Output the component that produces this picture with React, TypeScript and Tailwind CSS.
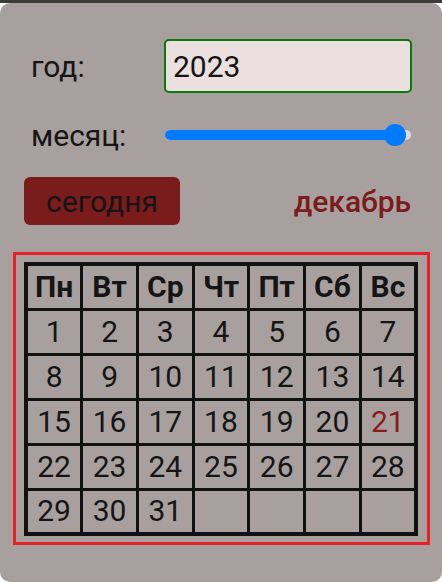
import React from 'react';

const days = ['Пн', 'Вт', 'Ср', 'Чт', 'Пт', 'Сб', 'Вс'];

function buildWeeks(): (number | null)[][] {
  const cells: (number | null)[] = [];
  for (let d = 1; d <= 31; d++) cells.push(d);
  while (cells.length % 7 !== 0) cells.push(null);
  const weeks: (number | null)[][] = [];
  for (let i = 0; i < cells.length; i += 7) weeks.push(cells.slice(i, i + 7));
  return weeks;
}

function MonthSlider() {
  return (
    <div className="relative h-[22px] w-[246px]">
      <div className="absolute left-0 right-0 top-[6px] h-[10px] rounded-full bg-[#dcdcdc]" />
      <div className="absolute left-0 top-[6px] h-[10px] w-[238px] rounded-full bg-[#007bff]" />
      <div className="absolute left-[219px] top-0 h-[22px] w-[22px] rounded-full bg-[#007bff]" />
    </div>
  );
}

export default function App() {
  const weeks = buildWeeks();
  const today = 21;

  return (
    <div className="min-h-screen bg-white" style={{ fontFamily: 'Roboto, "Liberation Sans", sans-serif' }}>
      <div className="h-[3px] bg-[#3b3b3b]" />
      <div className="h-[579px] rounded-[10px] bg-[#a8a09f] pl-[13px] pr-[12px] pt-[36px] text-[#151515]">
        <div className="flex h-[54px] items-center">
          <span className="ml-[18px] w-[133px] text-[30px]">год:</span>
          <div className="flex h-[54px] w-[248px] items-center rounded-[5px] border-2 border-[#0b7a0b] bg-[#ebdfe0] pl-[7px] text-[30px]">
            2023
          </div>
        </div>

        <div className="mt-[22px] flex h-[40px] items-center">
          <span className="ml-[18px] w-[134px] text-[30px]">месяц:</span>
          <MonthSlider />
        </div>

        <div className="mt-[22px] flex h-[48px] items-center justify-between">
          <button className="ml-[11px] h-[48px] w-[156px] rounded-[6px] bg-[#7a1c1c] text-[30px] text-[#151515]">
            сегодня
          </button>
          <span className="mr-[19px] text-[30px] font-medium text-[#7a1c1c]">декабрь</span>
        </div>

        <div className="mt-[27px] h-[293px] border-[3px] border-[#e8202a] px-[8px] pt-[7px]">
          <table className="w-[394px] border-collapse border-[4px] border-[#111] leading-none">
            <thead>
              <tr className="h-[45px]">
                {days.map(d => (
                  <th
                    key={d}
                    className="h-[45px] w-[56px] border-[3px] border-[#111] p-0 text-center text-[30px] leading-none font-bold"
                  >
                    {d}
                  </th>
                ))}
              </tr>
            </thead>
            <tbody>
              {weeks.map((week, wi) => (
                <tr key={wi} className="h-[45px]">
                  {week.map((d, di) =>
                    d === today ? (
                      <td
                        key={di}
                        className="h-[45px] border border-[#333] p-0 text-center text-[30px] leading-none text-[#8b1a1a]"
                      >
                        {d}
                      </td>
                    ) : (
                      <td
                        key={di}
                        className="h-[45px] border-[3px] border-[#111] p-0 text-center text-[30px] leading-none"
                      >
                        {d ?? ''}
                      </td>
                    ),
                  )}
                </tr>
              ))}
            </tbody>
          </table>
        </div>
      </div>
    </div>
  );
}
